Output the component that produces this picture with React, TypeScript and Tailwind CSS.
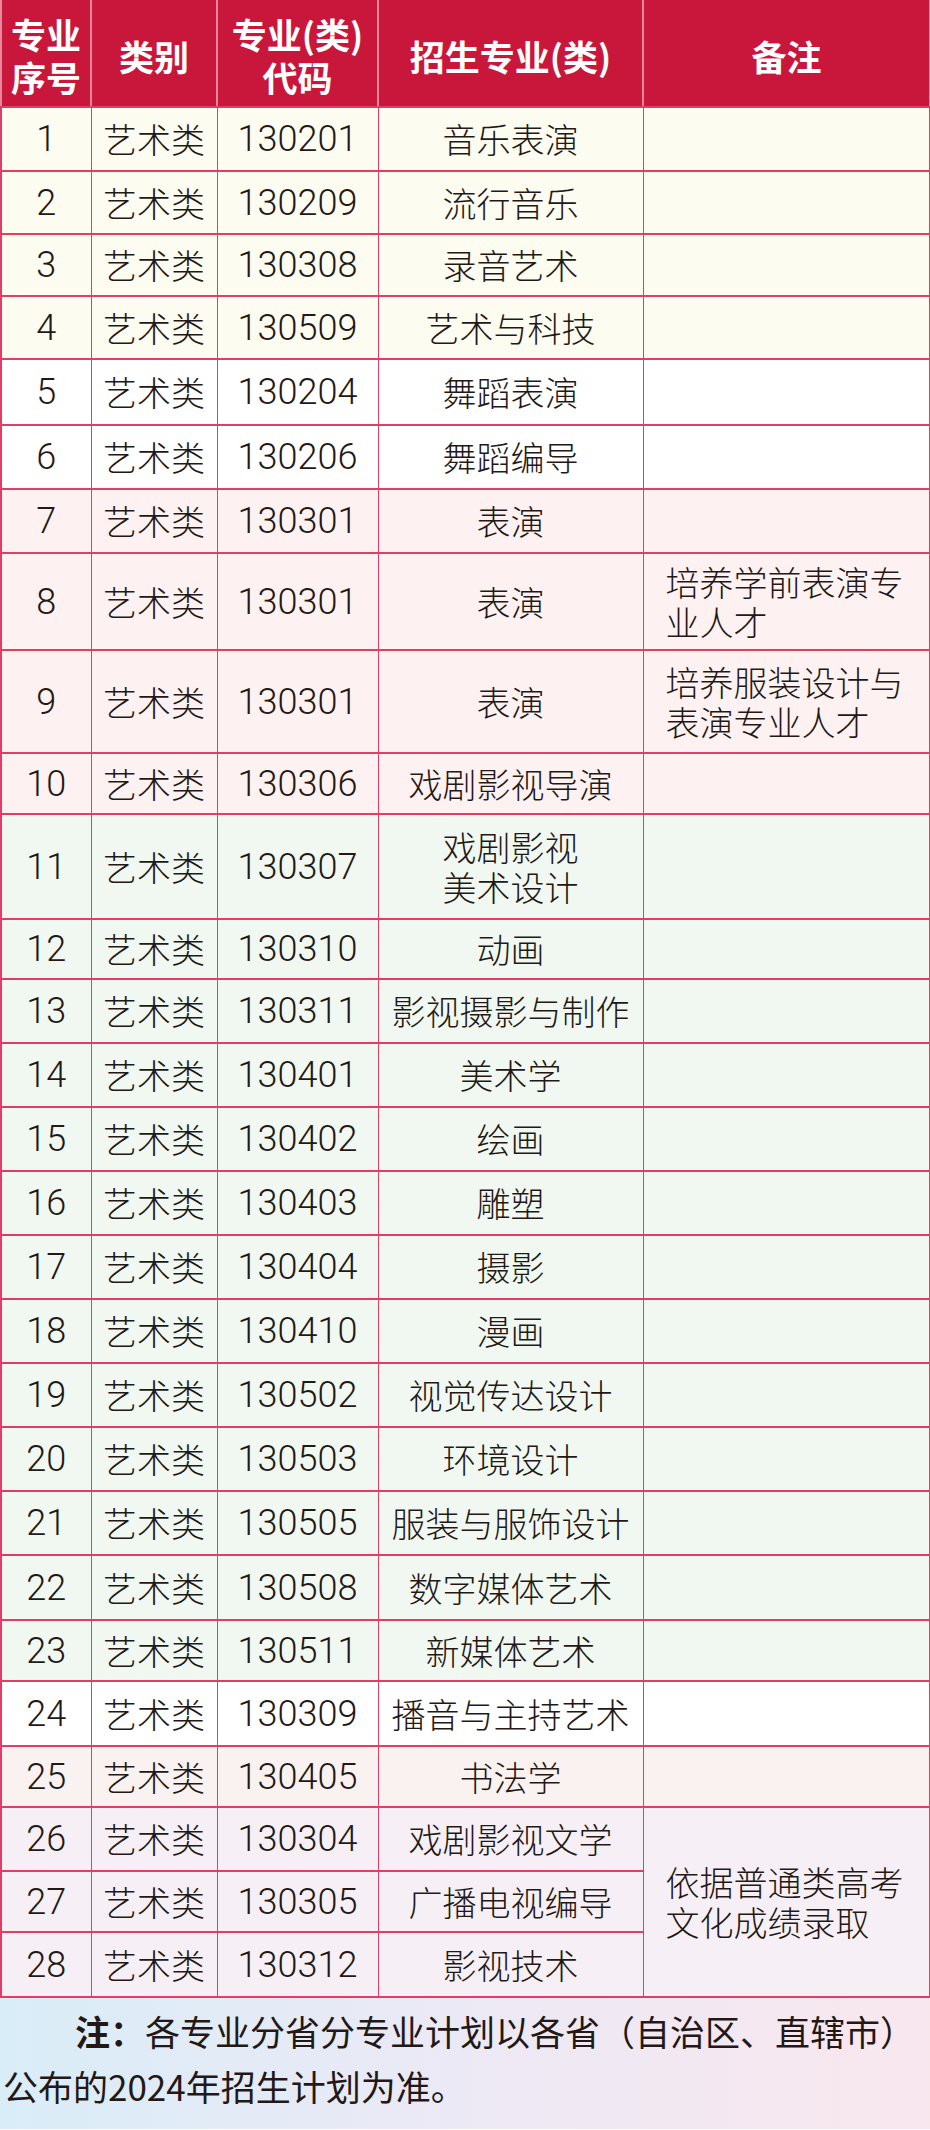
import React from 'react';

type Row = {
  n: number;
  code: string;
  major: string[];
  note?: string[];
  span?: number;
  skipNote?: boolean;
  bg: string;
  h: string;
};

const CREAM = 'bg-[#fdfcf1]';
const WHITE = 'bg-white';
const PINK = 'bg-[#fdf2f1]';
const GREEN = 'bg-[#f0f8f1]';
const ROSE = 'bg-[#faf2f1]';
const LILAC = 'bg-[#f6f0f6]';

const rows: Row[] = [
  { n: 1, code: '130201', major: ['音乐表演'], bg: CREAM, h: 'h-[64px]' },
  { n: 2, code: '130209', major: ['流行音乐'], bg: CREAM, h: 'h-[63px]' },
  { n: 3, code: '130308', major: ['录音艺术'], bg: CREAM, h: 'h-[62px]' },
  { n: 4, code: '130509', major: ['艺术与科技'], bg: CREAM, h: 'h-[63px]' },
  { n: 5, code: '130204', major: ['舞蹈表演'], bg: WHITE, h: 'h-[66px]' },
  { n: 6, code: '130206', major: ['舞蹈编导'], bg: WHITE, h: 'h-[64px]' },
  { n: 7, code: '130301', major: ['表演'], bg: PINK, h: 'h-[64px]' },
  { n: 8, code: '130301', major: ['表演'], note: ['培养学前表演专', '业人才'], bg: PINK, h: 'h-[97px]' },
  { n: 9, code: '130301', major: ['表演'], note: ['培养服装设计与', '表演专业人才'], bg: PINK, h: 'h-[103px]' },
  { n: 10, code: '130306', major: ['戏剧影视导演'], bg: PINK, h: 'h-[61px]' },
  { n: 11, code: '130307', major: ['戏剧影视', '美术设计'], bg: GREEN, h: 'h-[105px]' },
  { n: 12, code: '130310', major: ['动画'], bg: GREEN, h: 'h-[60px]' },
  { n: 13, code: '130311', major: ['影视摄影与制作'], bg: GREEN, h: 'h-[64px]' },
  { n: 14, code: '130401', major: ['美术学'], bg: GREEN, h: 'h-[64px]' },
  { n: 15, code: '130402', major: ['绘画'], bg: GREEN, h: 'h-[64px]' },
  { n: 16, code: '130403', major: ['雕塑'], bg: GREEN, h: 'h-[64px]' },
  { n: 17, code: '130404', major: ['摄影'], bg: GREEN, h: 'h-[64px]' },
  { n: 18, code: '130410', major: ['漫画'], bg: GREEN, h: 'h-[64px]' },
  { n: 19, code: '130502', major: ['视觉传达设计'], bg: GREEN, h: 'h-[64px]' },
  { n: 20, code: '130503', major: ['环境设计'], bg: GREEN, h: 'h-[64px]' },
  { n: 21, code: '130505', major: ['服装与服饰设计'], bg: GREEN, h: 'h-[64px]' },
  { n: 22, code: '130508', major: ['数字媒体艺术'], bg: GREEN, h: 'h-[65px]' },
  { n: 23, code: '130511', major: ['新媒体艺术'], bg: GREEN, h: 'h-[61px]' },
  { n: 24, code: '130309', major: ['播音与主持艺术'], bg: WHITE, h: 'h-[65px]' },
  { n: 25, code: '130405', major: ['书法学'], bg: ROSE, h: 'h-[61px]' },
  { n: 26, code: '130304', major: ['戏剧影视文学'], note: ['依据普通类高考', '文化成绩录取'], span: 3, bg: LILAC, h: 'h-[64px]' },
  { n: 27, code: '130305', major: ['广播电视编导'], skipNote: true, bg: LILAC, h: 'h-[61px]' },
  { n: 28, code: '130312', major: ['影视技术'], skipNote: true, bg: LILAC, h: 'h-[65px]' },
];

const cell = 'border-x border-y-2 border-[#e03e66] text-center align-middle p-0';
// thin digits, like the printed table
const digits = "font-['Roboto','Liberation_Sans',sans-serif] font-light text-[36px]";

const Lines: React.FC<{ lines: string[] }> = ({ lines }) => (
  <>
    {lines.map((l, i) => (
      <React.Fragment key={i}>
        {i > 0 && <br />}
        {l}
      </React.Fragment>
    ))}
  </>
);

const App: React.FC = () => {
  return (
    <div className="w-[930px] h-[2130px] bg-white text-[#231815] font-['Noto_Sans_CJK_SC',sans-serif] overflow-hidden">
      <table className="w-[929px] table-fixed border-collapse border-x-2 border-[#e03e66]">
        <colgroup>
          <col className="w-[90px]" />
          <col className="w-[126px]" />
          <col className="w-[161px]" />
          <col className="w-[265px]" />
          <col className="w-[287px]" />
        </colgroup>
        <thead>
          <tr className="h-[107px] bg-[#c9173b] text-white text-[35px] font-bold leading-[43px]">
            <th className="border-x-2 border-[#e8879b] border-b-2 border-b-[#e03e66] pt-[4px] font-bold">
              专业
              <br />
              序号
            </th>
            <th className="border-x-2 border-[#e8879b] border-b-2 border-b-[#e03e66] pt-[4px] font-bold">类别</th>
            <th className="border-x-2 border-[#e8879b] border-b-2 border-b-[#e03e66] pt-[4px] font-bold">
              专业(类)
              <br />
              代码
            </th>
            <th className="border-x-2 border-[#e8879b] border-b-2 border-b-[#e03e66] pt-[4px] font-bold">招生专业(类)</th>
            <th className="border-x-2 border-[#e8879b] border-b-2 border-b-[#e03e66] pt-[4px] font-bold">备注</th>
          </tr>
        </thead>
        <tbody className="text-[34px] font-light leading-[40px]">
          {rows.map((r) => (
            <tr key={r.n} className={`${r.h} ${r.bg}`}>
              <td className={`${cell} ${digits}`}>{r.n}</td>
              <td className={cell}>艺术类</td>
              <td className={`${cell} ${digits}`}>{r.code}</td>
              <td className={`${cell} whitespace-nowrap`}>
                <Lines lines={r.major} />
              </td>
              {!r.skipNote && (
                <td
                  rowSpan={r.span}
                  className="border-x border-y-2 border-[#e03e66] align-middle text-left pl-[22px] pr-0 whitespace-nowrap"
                >
                  {r.note && <Lines lines={r.note} />}
                </td>
              )}
            </tr>
          ))}
        </tbody>
      </table>

      <div className="h-[131px] bg-gradient-to-r from-[#d9edf8] via-[#ece9f5] to-[#f9e7ee] pl-[3px] pt-[5px] text-[35px] leading-[55px] whitespace-nowrap">
        <p className="pl-[72px]">
          <span className="font-bold">注：</span>
          各专业分省分专业计划以各省（自治区、直辖市）
        </p>
        <p>公布的2024年招生计划为准。</p>
      </div>
    </div>
  );
};

export default App;
